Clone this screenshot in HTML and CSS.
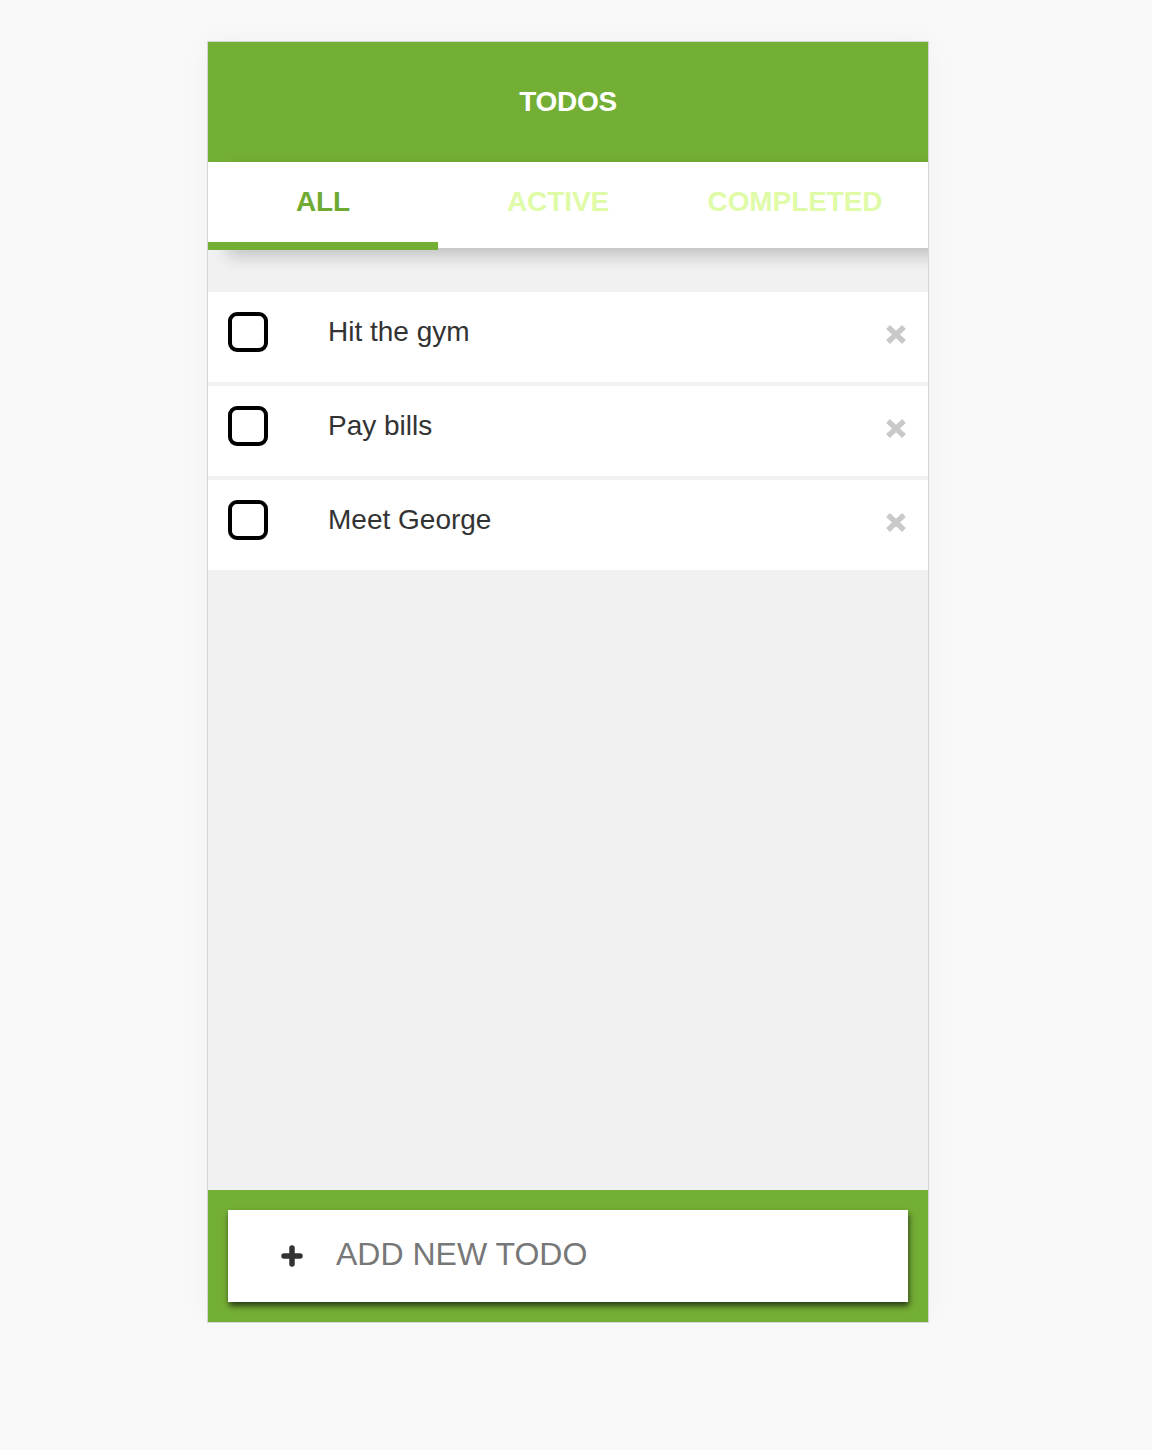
FILE: index.html
```html
<!DOCTYPE html>
<html lang="en">
<head>
<meta charset="utf-8">
<title>Todos</title>
<link rel="stylesheet" href="styles.css">
</head>
<body>
<div class="app">
  <header class="app-header">
    <h1 class="app-title">TODOS</h1>
  </header>
  <nav class="tabs">
    <div class="tab tab-all is-active">ALL</div>
    <div class="tab tab-active">ACTIVE</div>
    <div class="tab tab-completed">COMPLETED</div>
    <span class="tab-indicator"></span>
  </nav>
  <main class="content">
    <ul class="todo-list">
      <li class="todo">
        <span class="checkbox"></span>
        <span class="todo-text">Hit the gym</span>
        <svg class="remove" viewBox="0 0 22 21" width="22" height="21"><path d="M3 3 L19 18 M19 3 L3 18" stroke="#c9c9c9" stroke-width="5.5" stroke-linecap="butt" fill="none"/></svg>
      </li>
      <li class="todo">
        <span class="checkbox"></span>
        <span class="todo-text">Pay bills</span>
        <svg class="remove" viewBox="0 0 22 21" width="22" height="21"><path d="M3 3 L19 18 M19 3 L3 18" stroke="#c9c9c9" stroke-width="5.5" stroke-linecap="butt" fill="none"/></svg>
      </li>
      <li class="todo">
        <span class="checkbox"></span>
        <span class="todo-text">Meet George</span>
        <svg class="remove" viewBox="0 0 22 21" width="22" height="21"><path d="M3 3 L19 18 M19 3 L3 18" stroke="#c9c9c9" stroke-width="5.5" stroke-linecap="butt" fill="none"/></svg>
      </li>
    </ul>
  </main>
  <footer class="app-footer">
    <div class="add-todo">
      <svg class="plus" viewBox="0 0 22 22" width="22" height="22"><path d="M11 3 V19 M3 11 H19" stroke="#333" stroke-width="5.5" stroke-linecap="round" fill="none"/></svg>
      <span class="add-label">ADD NEW TODO</span>
    </div>
  </footer>
</div>
</body>
</html>
```

FILE: styles.css
```css
* { box-sizing: border-box; }

html, body {
  margin: 0;
  padding: 0;
  background: #f9f9f9;
}

body {
  padding: 41px 16px 0 0;
  font-family: "Liberation Sans", Arial, sans-serif;
}

.app {
  width: 722px;
  margin: 0 auto;
  border: 1px solid #d6d6d6;
  background: #f1f1f1;
  display: flex;
  flex-direction: column;
  height: 1282px;
  overflow: hidden;
  box-shadow: 0 0 30px rgba(0, 0, 0, 0.04);
}

.app-header {
  height: 120px;
  background: #74af35;
  display: flex;
  align-items: center;
  justify-content: center;
  flex: none;
}

.app-title {
  margin: 0;
  color: #ffffff;
  font-size: 28px;
  font-weight: bold;
  letter-spacing: -0.3px;
}

.tabs {
  position: relative;
  height: 86px;
  background: #ffffff;
  display: flex;
  flex: none;
  box-shadow: 20px 8px 16px rgba(0, 0, 0, 0.2);
  z-index: 1;
}

.tab {
  display: flex;
  align-items: center;
  justify-content: center;
  padding-bottom: 6px;
  font-size: 28px;
  font-weight: bold;
  color: #e0fba8;
  letter-spacing: -0.1px;
}

.tab-all { width: 230px; }
.tab-active { width: 240px; }
.tab-completed { width: 234px; }

.tab.is-active { color: #6fab33; }

.tab-indicator {
  position: absolute;
  left: 0;
  bottom: -2px;
  width: 230px;
  height: 8px;
  background: #74af35;
}

.content {
  flex: 1;
  padding-top: 44px;
}

.todo-list {
  list-style: none;
  margin: 0;
  padding: 0;
  display: flex;
  flex-direction: column;
  gap: 4px;
}

.todo {
  height: 90px;
  background: #ffffff;
  display: flex;
  align-items: center;
  padding: 0 21px 10px 20px;
}

.checkbox {
  width: 40px;
  height: 40px;
  border: 4px solid #000;
  border-radius: 9px;
  flex: none;
}

.todo-text {
  margin-left: 60px;
  flex: 1;
  font-size: 28px;
  color: #333;
}

.remove {
  flex: none;
  margin-top: 5px;
}

.app-footer {
  height: 132px;
  background: #74af35;
  padding: 20px;
  flex: none;
}

.add-todo {
  height: 92px;
  background: #ffffff;
  display: flex;
  align-items: center;
  padding-left: 53px;
  box-shadow: 1px 4px 6px rgba(0, 0, 0, 0.65);
}

.plus { flex: none; }

.add-label {
  margin-left: 33px;
  margin-bottom: 3px;
  font-size: 32px;
  color: #777;
}
```
